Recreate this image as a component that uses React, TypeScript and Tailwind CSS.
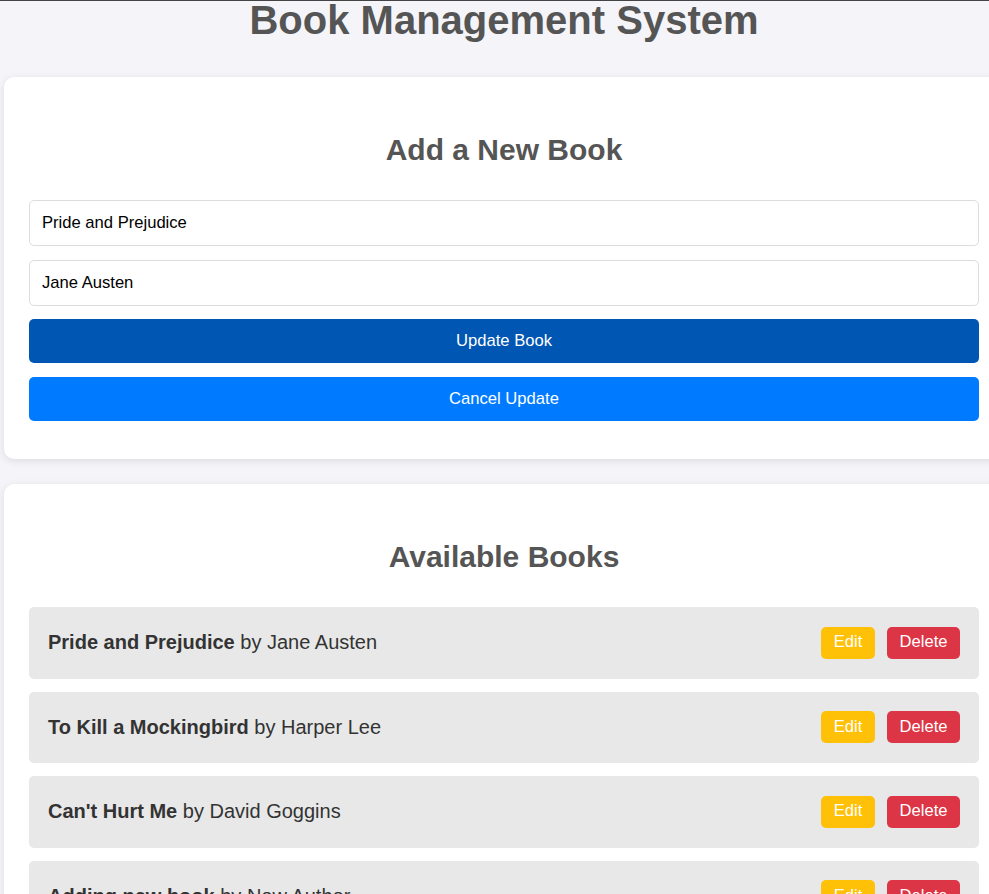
import React from "react";

const books = [
  { title: "Pride and Prejudice", author: "Jane Austen" },
  { title: "To Kill a Mockingbird", author: "Harper Lee" },
  { title: "Can't Hurt Me", author: "David Goggins" },
  { title: "Adding new book", author: "New Author" },
];

export default function App() {
  return (
    <div
      className="w-[989px] h-[894px] overflow-hidden bg-[#f4f4f9] border-t border-[#444]"
      style={{ fontFamily: '"Liberation Sans", Arial, sans-serif' }}
    >
      <div className="ml-[4px] w-[1000px]">
        <h1 className="mt-[-4px] text-center text-[40px] leading-[46px] font-bold text-[#555]">
          Book Management System
        </h1>

        <div className="mt-[34px] bg-white rounded-[10px] shadow-[0_2px_8px_rgba(0,0,0,0.1)] px-[25px] pt-[56px] pb-[38px]">
          <h2 className="text-center text-[30px] leading-[34px] font-bold text-[#555]">
            Add a New Book
          </h2>
          <div className="mt-[33px] flex flex-col">
            <input
              className="h-[46px] w-full border border-[#ddd] rounded-[5px] px-[12px] text-[16.6px] text-black outline-none"
              defaultValue="Pride and Prejudice"
            />
            <input
              className="mt-[14px] h-[46px] w-full border border-[#ddd] rounded-[5px] px-[12px] text-[16.6px] text-black outline-none"
              defaultValue="Jane Austen"
            />
            <button className="mt-[13px] h-[44px] w-full rounded-[5px] bg-[#0056b3] text-white text-[16.6px]">
              Update Book
            </button>
            <button className="mt-[14px] h-[44px] w-full rounded-[5px] bg-[#007bff] text-white text-[16.6px]">
              Cancel Update
            </button>
          </div>
        </div>

        <div className="mt-[25px] bg-white rounded-[10px] shadow-[0_2px_8px_rgba(0,0,0,0.1)] px-[25px] pt-[56px] pb-[38px]">
          <h2 className="text-center text-[30px] leading-[34px] font-bold text-[#555]">
            Available Books
          </h2>
          <ul className="mt-[33px] flex flex-col gap-[13px]">
            {books.map((b) => (
              <li
                key={b.title}
                className="h-[71.5px] flex items-center justify-between bg-[#e8e8e8] rounded-[5px] pl-[19px] pr-[19px]"
              >
                <span className="text-[20px] leading-[23px] text-[#333]">
                  <strong className="font-bold">{b.title}</strong> by {b.author}
                </span>
                <div className="flex items-center gap-[12px]">
                  <button className="w-[54px] h-[32px] rounded-[5px] bg-[#ffc107] text-white text-[16.6px]">
                    Edit
                  </button>
                  <button className="w-[73px] h-[32px] rounded-[5px] bg-[#dc3545] text-white text-[16.6px]">
                    Delete
                  </button>
                </div>
              </li>
            ))}
          </ul>
        </div>
      </div>
    </div>
  );
}
